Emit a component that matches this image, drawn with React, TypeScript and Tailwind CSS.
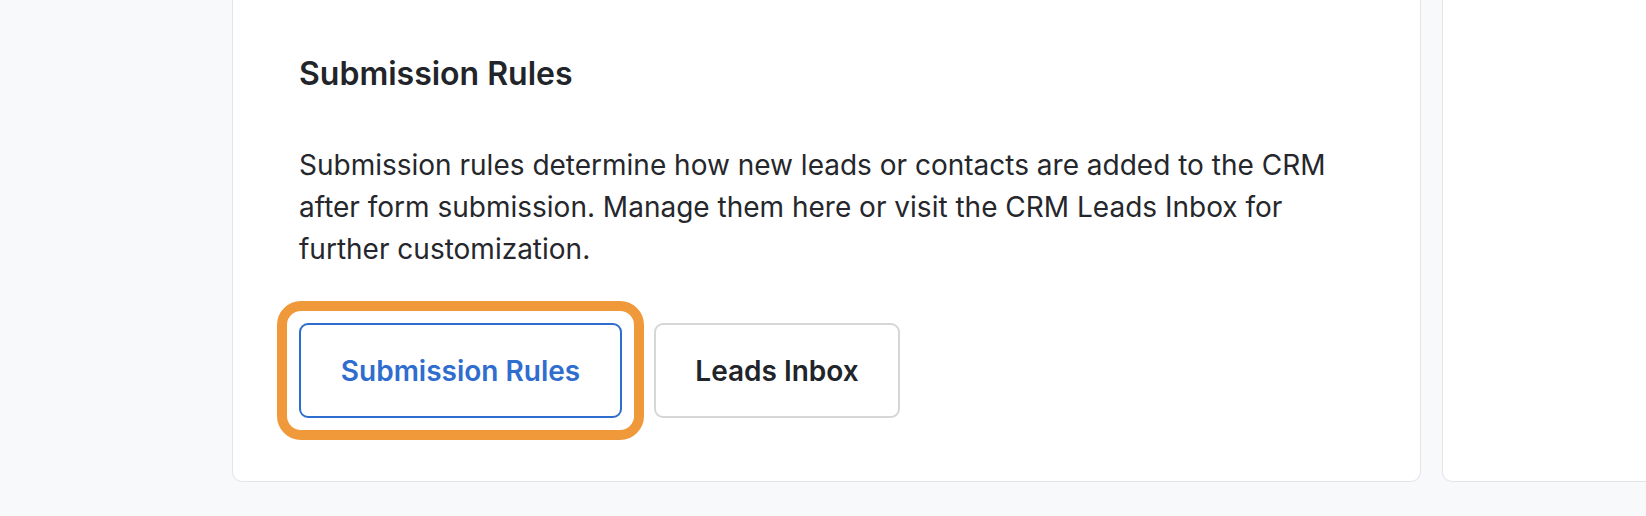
export default function App() {
  return (
    <div
      className="min-h-[516px] w-full overflow-hidden bg-[#f8f9fb] flex gap-[21px] pl-[232px]"
      style={{ fontFamily: 'Inter, "Noto Sans", sans-serif' }}
    >
      {/* main settings card, top is scrolled out of view */}
      <div className="w-[1189px] h-[482px] shrink-0 bg-white border border-t-0 border-[#e3e4e8] rounded-b-[10px] pl-[66px] pt-[54px]">
        <h2 className="text-[32px] leading-[40px] font-semibold text-[#212429]">Submission Rules</h2>
        <p className="mt-[50px] text-[28px] leading-[42px] text-[#25272c] whitespace-nowrap">
          Submission rules determine how new leads or contacts are added to the CRM
          <br />
          after form submission. Manage them here or visit the CRM Leads Inbox for
          <br />
          further customization.
        </p>
        <div className="mt-[53px] flex items-start gap-[32px]">
          <div className="relative">
            <div className="absolute -inset-[22px] border-[10px] border-[#f0993a] rounded-[24px] pointer-events-none" />
            <button className="w-[323px] h-[95px] rounded-[9px] border-2 border-[#2f6dce] bg-white text-[28px] font-semibold text-[#2f6dce]">
              Submission Rules
            </button>
          </div>
          <button className="w-[246px] h-[95px] rounded-[9px] border-2 border-[#d6d6d8] bg-white text-[28px] font-semibold text-[#212429]">
            Leads Inbox
          </button>
        </div>
      </div>

      {/* next card peeking in from the right */}
      <div className="w-[400px] h-[482px] shrink-0 bg-white border border-t-0 border-[#e3e4e8] rounded-b-[10px]" />
    </div>
  )
}
